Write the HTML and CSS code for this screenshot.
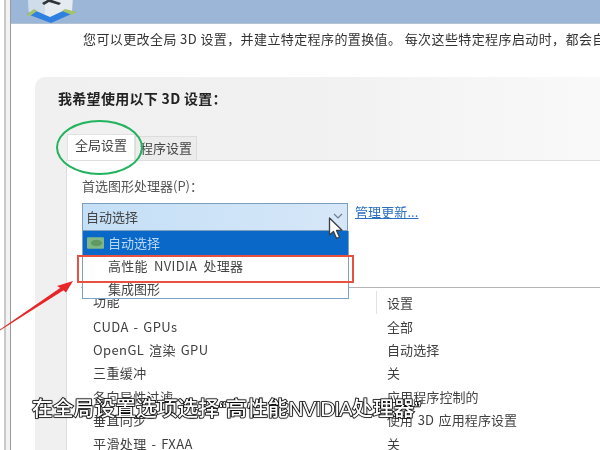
FILE: index.html
```html
<!DOCTYPE html>
<html lang="zh-CN">
<head>
<meta charset="utf-8">
<title>管理 3D 设置</title>
<link rel="stylesheet" href="styles.css">
</head>
<body>
<div class="screen">
  <div class="window">
    <header class="banner">
      <svg class="logo" viewBox="0 0 54 24" width="54" height="24">
        <path d="M3 -4 L48 -4 L47 12 L26 18 L4 13 Z" fill="#e6ebf2"/>
        <path d="M3 -4 L20 -4 L20 14 L4 13 Z" fill="#cfdcea"/>
        <path d="M17 3 L24 -1 L36 3 L34 5 L24 2 L19 5 Z" fill="#2e3438"/>
        <path d="M2 14 L9 10 L25 17 L40 10 L51 12 L26 23 Z" fill="#2f80e0"/>
        <path d="M1 15 L9 9 L12 11 L5 16 Z M52 12 L40 9 L37 11 L47 15 Z" fill="#a5c46a"/>
      </svg>
      <h1 class="title">管理 3D 设置</h1>
    </header>
    <p class="intro">您可以更改全局 3D 设置，并建立特定程序的置换值。 每次这些特定程序启动时，都会自动使用置换值。</p>
    <section class="panel">
      <h2 class="panel-title">我希望使用以下 3D 设置：</h2>
      <div class="tabs">
        <span class="tab tab-active">全局设置</span>
        <span class="tab">程序设置</span>
      </div>
      <div class="pane">
        <div class="field-label">首选图形处理器(P)：</div>
        <div class="picker-row">
          <div class="select">
            <span class="select-text">自动选择</span>
            <svg class="chevron" viewBox="0 0 10 6" width="10" height="6"><path d="M1 1 L5 5 L9 1" fill="none" stroke="#6d7f92" stroke-width="1.2"/></svg>
          </div>
          <a class="manage">管理更新...</a>
        </div>
        <div class="table">
          <div class="thead"><span class="col-a">功能</span><span class="col-b">设置</span></div>
          <div class="row"><span class="col-a">CUDA - GPUs</span><span class="col-b">全部</span></div>
          <div class="row"><span class="col-a">OpenGL 渲染 GPU</span><span class="col-b">自动选择</span></div>
          <div class="row"><span class="col-a">三重缓冲</span><span class="col-b">关</span></div>
          <div class="row"><span class="col-a">各向异性过滤</span><span class="col-b">应用程序控制的</span></div>
          <div class="row"><span class="col-a">垂直同步</span><span class="col-b">使用 3D 应用程序设置</span></div>
          <div class="row"><span class="col-a">平滑处理 - FXAA</span><span class="col-b">关</span></div>
        </div>
      </div>
    </section>
  </div>

  <div class="menu">
    <div class="option option-on">
      <svg class="chip" viewBox="0 0 18 12" width="17" height="12"><rect width="18" height="12" rx="1" fill="#7fb886"/><ellipse cx="10" cy="6" rx="6" ry="3.4" fill="#5f9a62"/></svg>
      <span>自动选择</span>
    </div>
    <div class="option option-wide">高性能 NVIDIA 处理器</div>
    <div class="option">集成图形</div>
  </div>

  <div class="ring"></div>
  <div class="redbox"></div>

  <svg class="arrow" viewBox="0 0 80 70" width="80" height="70">
    <path d="M0 59.6 L0 60.6 L64 20 L61.5 17 Z" fill="#e8262a"/>
    <path d="M73 11 L57 16 L62 19 L66 22.5 Z" fill="#e8262a"/>
  </svg>

  <svg class="cursor" viewBox="0 0 16 24" width="16" height="24">
    <path d="M1.5 1 L1.5 18 L5.5 14.5 L8.5 21.5 L11.5 20 L8.5 13.5 L14 13.2 Z" fill="#fff" stroke="#3a3f45" stroke-width="1.3" stroke-linejoin="round"/>
  </svg>

  <div class="caption">在全局设置选项选择“高性能<span class="caption-latin">NVIDIA</span>处理器”</div>
</div>
</body>
</html>
```
FILE: styles.css
```css
* { box-sizing: border-box; }
html, body { margin: 0; padding: 0; background: #fff; }
body { font-family: "Noto Sans CJK SC", "Noto Sans", sans-serif; color: #3a3a3a; }

.screen {
  position: relative;
  width: 600px;
  height: 450px;
  overflow: hidden;
  background: #fff;
}

.window {
  width: 600px;
  height: 450px;
  padding-left: 11px;
  border-left: 4px solid #fff;
  background: linear-gradient(90deg, #c9c9c9 0, #c9c9c9 2px, #f2f2f2 2px, #f2f2f2 6px, #9a9a9a 6px, #9a9a9a 7px, #fff 7px);
  filter: blur(0.35px);
}

.banner {
  display: flex;
  align-items: flex-end;
  height: 24px;
  margin-left: -4px;
  background: #9bb6d6;
  border-bottom: 1px solid #b4c3d2;
  overflow: hidden;
}
.logo { margin-left: 14px; margin-bottom: -1px; flex: none; }
.title {
  margin: -21px 0 0 14px;
  align-self: flex-start;
  font-size: 20px;
  line-height: 22px;
  font-weight: 700;
  color: #2a2f36;
  word-spacing: 4px;
  letter-spacing: 5px;
  white-space: nowrap;
}

.intro {
  margin: 5px 0 0 68px;
  font-size: 13px;
  line-height: 20px;
  height: 20px;
  white-space: nowrap;
  letter-spacing: 0.4px;
  color: #333;
}

.panel {
  margin: 28px 0 0 20px;
  height: 380px;
  padding: 10px 0 0 32px;
  width: 620px;
  border-radius: 10px 0 0 0;
  background: linear-gradient(90deg, #f0f0f0 0, #f1f1f1 45%, #f9f9f9 90%);
}
.panel-title {
  margin: 0 0 0 -9px;
  height: 22px;
  font-size: 14px;
  line-height: 22px;
  font-weight: 700;
  color: #222;
  letter-spacing: 0.3px;
}

.tabs {
  display: flex;
  align-items: flex-end;
  height: 31px;
  margin-top: 20px;
}
.tab {
  width: 62px;
  height: 24px;
  font-size: 13px;
  line-height: 21px;
  text-align: center;
  background: #ececec;
  border: 1px solid #dcdcdc;
  border-bottom: 0;
  color: #444;
}
.tab-active {
  width: 68px;
  height: 26px;
  line-height: 20px;
  background: #fff;
  border-color: #e2e2e2;
}

.pane {
  height: 300px;
  margin-left: -1px;
  padding: 16px 0 0 15px;
  background: #fff;
  border-left: 1px solid #dedede;
  border-top: 1px solid #dedede;
}
.field-label {
  height: 20px;
  font-size: 13px;
  line-height: 18px;
  color: #555;
}
.picker-row {
  display: flex;
  align-items: flex-start;
  height: 84px;
  margin-top: 6px;
}
.select {
  display: flex;
  align-items: center;
  justify-content: space-between;
  width: 266px;
  height: 28px;
  padding: 0 4px 0 3px;
  font-size: 13px;
  color: #444;
  background: linear-gradient(90deg, #c4dff6 0, #d6e7f8 100%);
  border: 1px solid #7d9fbe;
}
.select-text { margin-bottom: 2px; }
.chevron { margin: 0 0 2px; }
.manage {
  margin: -1px 0 0 7px;
  font-size: 13px;
  line-height: 20px;
  letter-spacing: 0.1px;
  color: #2a6fc0;
  text-decoration: underline;
}

.table {
  margin-left: -1px;
  padding-top: 3px;
  border-top: 1px solid #b4b4b4;
}
.thead, .row {
  display: flex;
  align-items: center;
  height: 23.4px;
  font-size: 13px;
  color: #3f3f3f;
}
.col-a {
  width: 296px;
  padding-left: 12px;
  white-space: nowrap;
  letter-spacing: 0.4px;
  word-spacing: 1.5px;
}
.col-b { padding-left: 10px; white-space: nowrap; letter-spacing: 0.1px; word-spacing: 1.5px; }
.thead .col-a { height: 100%; border-right: 1px solid #e2e2e2; }

.menu {
  position: absolute;
  left: 82px;
  top: 231px;
  width: 267px;
  height: 68px;
  background: #fff;
  border: 1px solid #7ba3c9;
  border-top: 0;
  font-size: 13px;
  filter: blur(0.3px);
}
.option {
  height: 23px;
  padding-left: 25px;
  line-height: 22px;
  color: #444;
  white-space: nowrap;
}
.option-wide { letter-spacing: 0.3px; word-spacing: 3px; }
.option-on {
  display: flex;
  align-items: center;
  gap: 4px;
  height: 24px;
  padding-left: 4px;
  background: #0a68c8;
  color: #b9d8f4;
}

.ring {
  position: absolute;
  left: 56px;
  top: 120px;
  width: 87px;
  height: 55px;
  border: 2px solid #22b35e;
  border-radius: 50%;
}
.redbox {
  position: absolute;
  left: 77px;
  top: 255px;
  width: 277px;
  height: 28px;
  border: 2.5px solid #e8503f;
}
.arrow { position: absolute; left: 0; top: 270px; }
.cursor { position: absolute; left: 328px; top: 217px; }

.caption {
  position: absolute;
  left: 32px;
  top: 395px;
  font-family: "Liberation Sans", "Noto Sans CJK SC", sans-serif;
  font-size: 20.8px;
  font-weight: 500;
  line-height: 28px;
  white-space: nowrap;
  color: #fff;
  text-shadow: 0 0 1px #000, 0 0 2px #000;
  -webkit-text-stroke: 1.6px #111;
  paint-order: stroke fill;
}
.caption-latin { letter-spacing: -1px; }
```
